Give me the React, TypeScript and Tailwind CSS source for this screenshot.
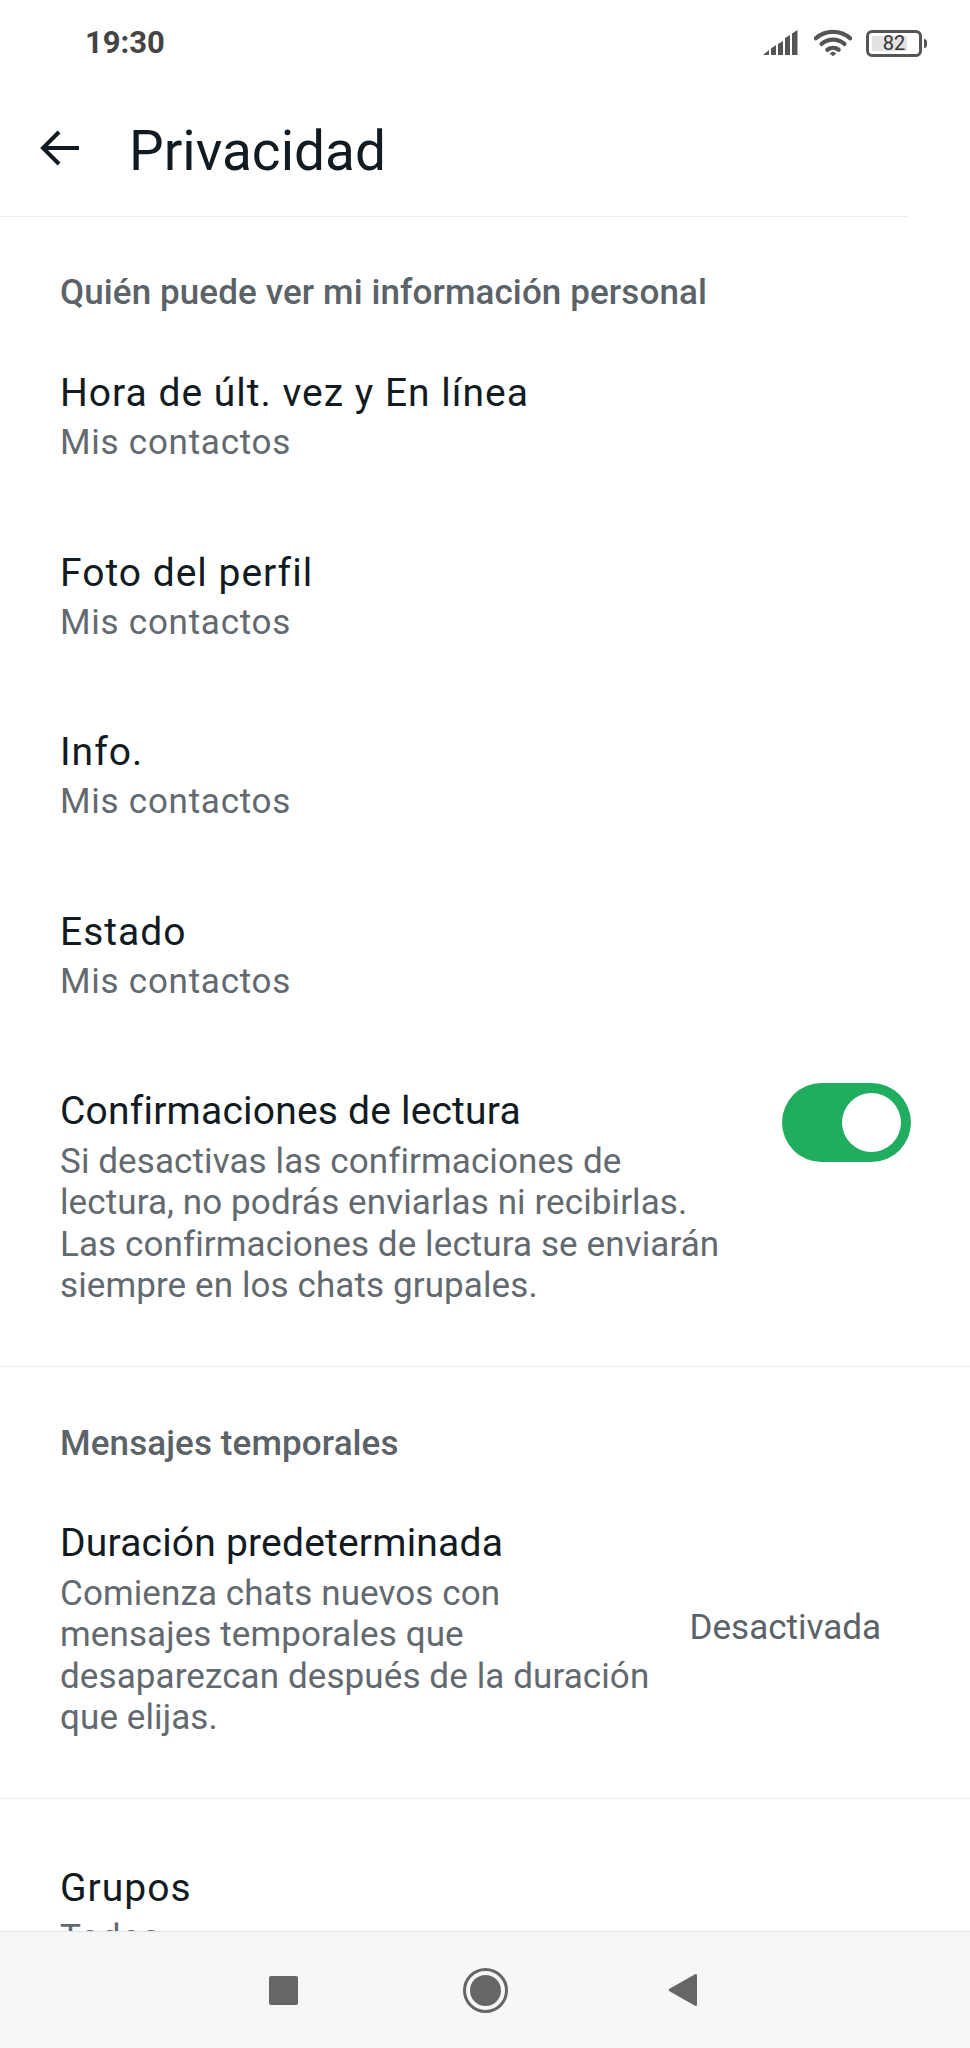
const font = { fontFamily: 'Roboto, sans-serif' };

function StatusIcons() {
  return (
    <div className="flex items-center">
      <svg width="36" height="26" viewBox="0 0 36 26" fill="#555">
        <path d="M0 25 L6 20 V25 Z" />
        <path d="M8 18.500 L13 15 V25 H8 Z" />
        <path d="M15 14 L20 11 V25 H15 Z" />
        <path d="M22 8 L27 5 V25 H22 Z" />
        <path d="M29 3.500 L34.500 0 V25 H29 Z" />
      </svg>
      <svg className="ml-[15px]" width="38" height="28" viewBox="0 0 40 28" fill="none" stroke="#555" strokeWidth="4.500" strokeLinecap="round">
        <path d="M2 9 C12 0 28 0 38 9" />
        <path d="M8 15 C15 9 25 9 32 15" />
        <path d="M14 21 C17.500 18.500 22.500 18.500 26 21" />
        <path d="M16.500 25 L20 23 L23.500 25 L20 28 Z" fill="#555" stroke="none" />
      </svg>
      <div className="relative ml-[14px] flex h-[27px] w-[56px] items-center justify-center rounded-[6px] border-[3px] border-[#555]">
        <div className="absolute left-[3px] top-[3px] h-[15px] w-[35px] bg-[#e2e2e2]" />
        <span className="relative text-[20px] leading-none text-[#333]">82</span>
      </div>
      <div className="ml-[2px] h-[9px] w-[3px] rounded-r-sm bg-[#555]" />
    </div>
  );
}

function Row({ title, sub, top = 50 }: { title: string; sub: string; top?: number }) {
  return (
    <div className="h-[179.5px] pl-[60px]" style={{ paddingTop: top }}>
      <div className="text-[39px] leading-[50px] tracking-[1px] text-[#111b21]">{title}</div>
      <div className="text-[35px] leading-[50px] tracking-[0.75px] text-[#62696f]">{sub}</div>
    </div>
  );
}

export default function App() {
  return (
    <div className="flex h-[2048px] w-[970px] flex-col overflow-hidden bg-white" style={font}>
      <div className="flex h-[86px] shrink-0 items-center justify-between pl-[85px] pr-[43px]">
        <span className="mt-[1px] text-[31px] font-bold text-[#444]">19:30</span>
        <StatusIcons />
      </div>

      <div className="flex h-[131px] w-[908px] shrink-0 items-center border-b border-[#eeeeee] pl-[40px]">
        <svg className="mt-[-6px]" width="40" height="38" viewBox="0 0 40 38" fill="none" stroke="#111b21" strokeWidth="4">
          <path d="M4 19 H39" />
          <path d="M19 3 L3 19 L19 35" />
        </svg>
        <h1 className="ml-[49px] text-[55px] font-normal text-[#111b21]">Privacidad</h1>
      </div>

      <div className="flex-1 overflow-hidden">
        <div className="pl-[60px] pt-[51px] text-[35px] font-medium leading-[50px] tracking-[0.1px] text-[#5b6268]">Quién puede ver mi información personal</div>
        <Row title="Hora de últ. vez y En línea" sub="Mis contactos" />
        <Row title="Foto del perfil" sub="Mis contactos" />
        <Row title="Info." sub="Mis contactos" />
        <Row title="Estado" sub="Mis contactos" />

        <div className="flex items-start justify-between pl-[60px] pr-[59px] pt-[50px]">
          <div className="w-[665px]">
            <div className="text-[39px] leading-[50px] tracking-[0.2px] text-[#111b21]">Confirmaciones de lectura</div>
            <div className="mt-[5px] text-[35px] leading-[41.3px] tracking-[0.1px] text-[#62696f]">Si desactivas las confirmaciones de lectura, no podrás enviarlas ni recibirlas. Las confirmaciones de lectura se enviarán siempre en los chats grupales.</div>
          </div>
          <div className="mt-[-3px] flex h-[79px] w-[129px] items-center justify-end rounded-full bg-[#20ad60] pr-[10px]">
            <div className="h-[59px] w-[59px] rounded-full bg-white" />
          </div>
        </div>

        <div className="mt-[60px] border-b border-[#eeeeee]" />

        <div className="pl-[60px] pt-[52px] text-[35px] font-medium leading-[50px] tracking-[0.1px] text-[#5b6268]">Mensajes temporales</div>
        <div className="flex items-center justify-between pl-[60px] pr-[89px] pt-[49px]">
          <div className="w-[590px]">
            <div className="text-[39px] leading-[50px] tracking-[0.2px] text-[#111b21]">Duración predeterminada</div>
            <div className="mt-[5px] text-[35px] leading-[41.3px] tracking-[0.1px] text-[#62696f]">Comienza chats nuevos con mensajes temporales que desaparezcan después de la duración que elijas.</div>
          </div>
          <span className="text-[35px] text-[#5b6268]">Desactivada</span>
        </div>
        <div className="mt-[60px] border-b border-[#eeeeee]" />
        <Row title="Grupos" sub="Todos" top={64} />
      </div>

      <div className="flex h-[117px] shrink-0 items-center border-t border-[#e4e4e4] bg-[#f6f7f9] pl-[269px]">
        <div className="h-[29px] w-[29px] rounded-[2px] bg-[#666666]" />
        <div className="ml-[165px] flex h-[45px] w-[45px] items-center justify-center rounded-full border-[3px] border-[#666666]">
          <div className="h-[31px] w-[31px] rounded-full bg-[#666666]" />
        </div>
        <svg className="ml-[160px]" width="30" height="34" viewBox="0 0 30 34" fill="#666666">
          <path d="M29 1.500 V32.500 L27.500 33 L1 18 V16 L27.500 1 Z" />
        </svg>
      </div>
    </div>
  );
}
